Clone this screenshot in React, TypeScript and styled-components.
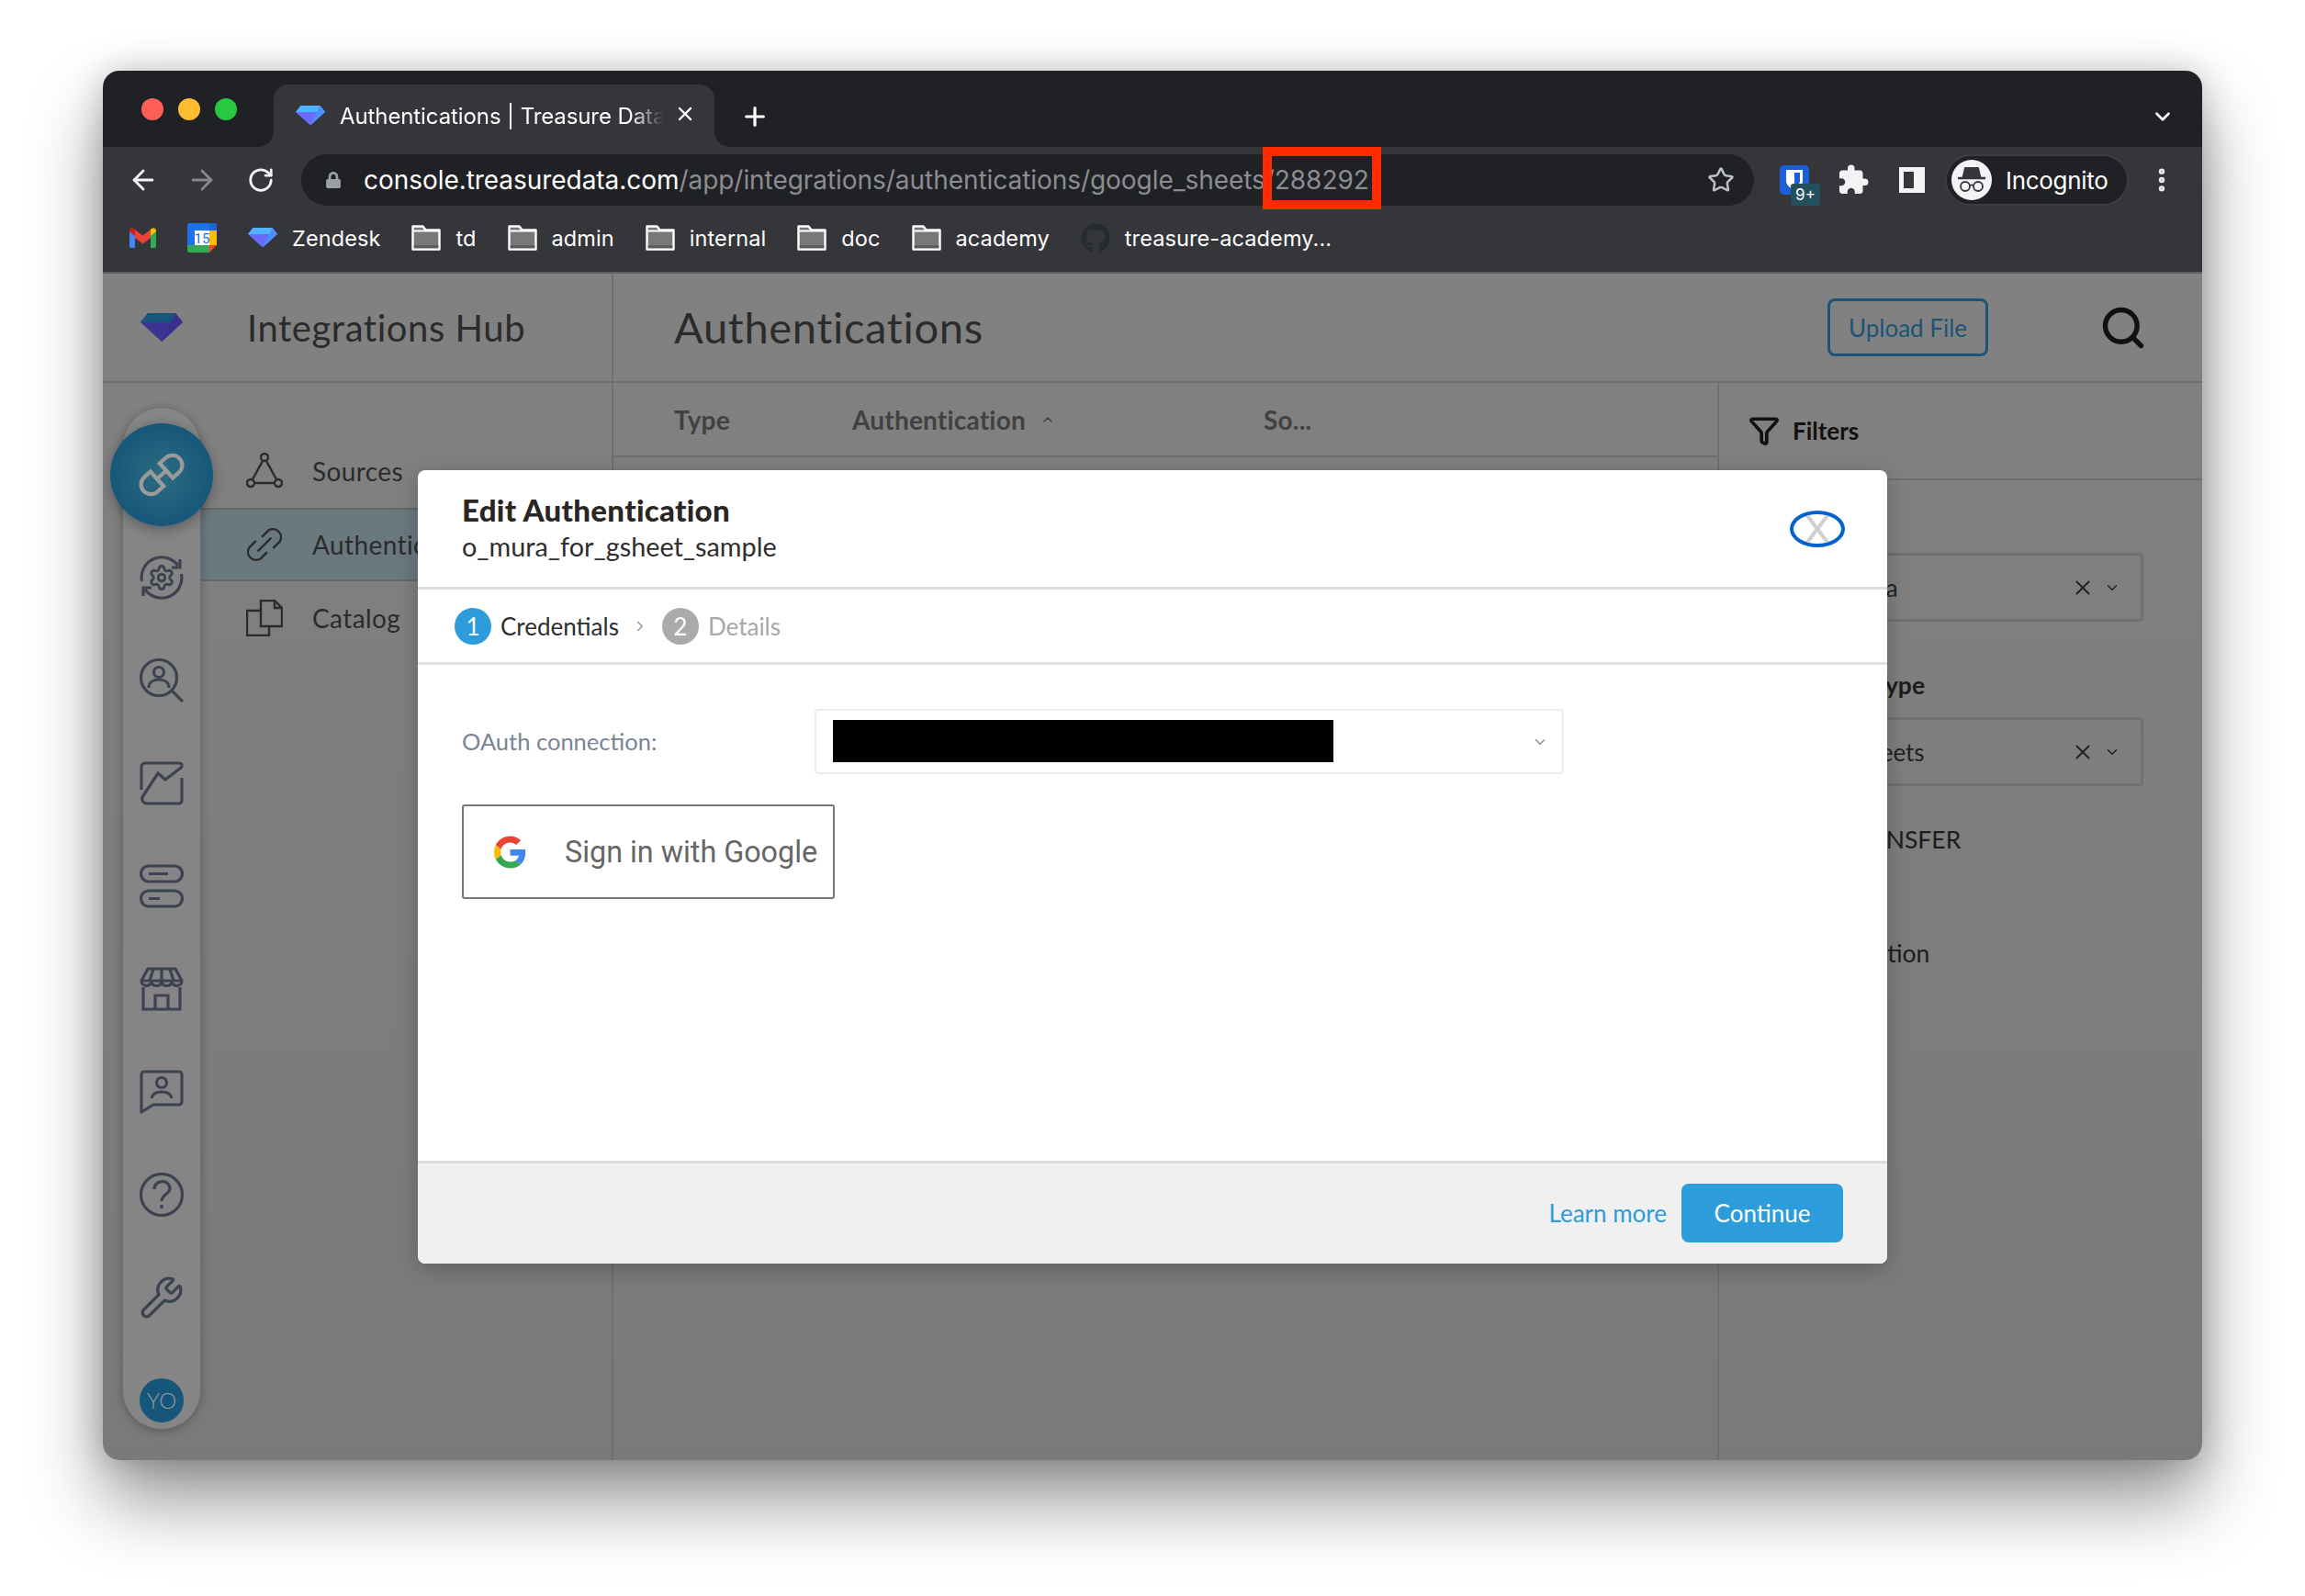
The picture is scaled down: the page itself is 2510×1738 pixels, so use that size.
import styled, { createGlobalStyle } from "styled-components";
import {
  ArrowLeft,
  ArrowRight,
  ChevronDown,
  ChevronRight,
  ChevronUp,
  EllipsisVertical,
  Funnel,
  Plus,
  RotateCw,
  Search,
  Settings,
  Star,
  Wrench,
  X,
} from "lucide-react";
import { FaGithub, FaLock } from "react-icons/fa";
import { MdExtension } from "react-icons/md";

const chromeFont = `"Inter", "Liberation Sans", sans-serif`;
const appFont = `"Lato", "Noto Sans", sans-serif`;

const GlobalStyle = createGlobalStyle`
  html, body {
    margin: 0;
    padding: 0;
    background: #fff;
  }
  * {
    box-sizing: border-box;
  }
`;

const Page = styled.div`
  width: 2510px;
  height: 1738px;
  padding: 77px 112px 148px;
  background: #fff;
  overflow: hidden;
`;

const Window = styled.div`
  position: relative;
  height: 100%;
  display: flex;
  flex-direction: column;
  border-radius: 18px;
  overflow: hidden;
`;

const WindowShadow = styled.div`
  height: 100%;
  border-radius: 18px;
  box-shadow: 0 44px 80px rgba(0, 0, 0, 0.42), 0 0 36px rgba(0, 0, 0, 0.2);
`;

const TabStrip = styled.div`
  height: 83px;
  flex: none;
  display: flex;
  align-items: flex-end;
  background: #202124;
  padding-left: 42px;
  color: #fff;
  font-family: ${chromeFont};
`;

const Lights = styled.div`
  display: flex;
  gap: 16px;
  align-self: flex-start;
  margin-top: 30px;
  margin-right: 40px;
`;

const Light = styled.span<{ $color: string }>`
  width: 24px;
  height: 24px;
  border-radius: 50%;
  background: ${(p) => p.$color};
`;

const Tab = styled.div`
  position: relative;
  width: 480px;
  height: 68px;
  display: flex;
  align-items: center;
  padding: 0 20px 0 24px;
  background: #35363a;
  border-radius: 16px 16px 0 0;

  &::before,
  &::after {
    content: "";
    position: absolute;
    bottom: 0;
    width: 16px;
    height: 16px;
  }
  &::before {
    left: -16px;
    background: radial-gradient(circle at 0 0, #202124 15.5px, #35363a 16px);
  }
  &::after {
    right: -16px;
    background: radial-gradient(circle at 100% 0, #202124 15.5px, #35363a 16px);
  }
`;

const TabTitle = styled.span`
  flex: 1;
  margin-left: 16px;
  font-size: 24px;
  letter-spacing: -0.1px;
  white-space: nowrap;
  overflow: hidden;
  mask-image: linear-gradient(to right, #000 90%, transparent 100%);
`;

const TabAction = styled.span`
  display: flex;
  margin-left: 12px;
  margin-bottom: 4px;
`;

const NewTab = styled.span`
  display: flex;
  margin-left: 28px;
  margin-bottom: 17px;
`;

const TabStripEnd = styled.span`
  display: flex;
  margin-left: auto;
  margin-right: 30px;
  margin-bottom: 20px;
`;

const Toolbar = styled.div`
  position: relative;
  height: 72px;
  flex: none;
  display: flex;
  align-items: center;
  padding: 0 12px;
  background: #35363a;
  font-family: ${chromeFont};
`;

const NavButton = styled.span<{ $dim?: boolean }>`
  width: 64px;
  display: flex;
  justify-content: center;
  color: ${(p) => (p.$dim ? "#85878b" : "#f1f3f4")};
`;

const Omnibox = styled.div`
  position: relative;
  width: 1582px;
  height: 56px;
  flex: none;
  margin-left: 12px;
  display: flex;
  align-items: center;
  padding: 0 21px 0 26px;
  border-radius: 28px;
  background: #202124;
`;

const Url = styled.span`
  flex: 1;
  margin-left: 24px;
  font-size: 28px;
  letter-spacing: -0.05px;
  color: #8b8d91;
  white-space: nowrap;
`;

const Host = styled.span`
  color: #fff;
`;

const RedMark = styled.span`
  position: absolute;
  left: 1047px;
  top: -8px;
  width: 129px;
  height: 68px;
  border: 10px solid #ff2a00;
`;

const ToolIcons = styled.div`
  display: flex;
  align-items: center;
  margin-left: 28px;
  color: #f1f3f4;
`;

const ExtIcon = styled.span`
  position: relative;
  width: 32px;
  height: 32px;
  border-radius: 5px;
  background: #1a5fd8;
  display: flex;
  justify-content: center;
  padding-top: 5px;
`;

const ExtBadge = styled.span`
  position: absolute;
  left: 12px;
  top: 20px;
  width: 32px;
  height: 24px;
  border-radius: 3px;
  background: #234f5f;
  color: #fff;
  font-size: 17px;
  line-height: 24px;
  text-align: center;
`;

const Incognito = styled.div`
  width: 200px;
  height: 56px;
  margin-left: 22px;
  display: flex;
  align-items: center;
  gap: 15px;
  padding-left: 5px;
  border-radius: 28px;
  border: 2px solid #3c3d41;
  background: #202124;
  color: #fff;
  font-size: 26px;
  letter-spacing: -0.3px;
`;

const IncognitoFace = styled.span`
  width: 44px;
  height: 44px;
  border-radius: 50%;
  background: #f1f3f4;
  display: flex;
  align-items: center;
  justify-content: center;
`;

const Kebab = styled.span`
  display: flex;
  margin-left: 20px;
  color: #e8eaed;
`;

const Bookmarks = styled.div`
  height: 66px;
  flex: none;
  display: flex;
  align-items: center;
  gap: 34px;
  padding: 0 0 10px 29px;
  background: #35363a;
  border-bottom: 2px solid #5f6063;
  color: #fff;
  font-family: ${chromeFont};
  font-size: 23.5px;
  letter-spacing: 0.1px;
`;

const Bookmark = styled.span`
  display: flex;
  align-items: center;
  gap: 16px;
  white-space: nowrap;
`;

const App = styled.div`
  flex: 1;
  min-height: 0;
  display: grid;
  grid-template-columns: 556px 1fr;
  background: linear-gradient(#818181, #7a7a7a);
  font-family: ${appFont};
  color: #2b2b2b;
`;

const LeftColumn = styled.div`
  display: flex;
  flex-direction: column;
  border-right: 2px solid #6f6f6f;
`;

const RightColumn = styled.div`
  display: flex;
  flex-direction: column;
  min-width: 0;
`;

const HubHeader = styled.div`
  height: 119px;
  flex: none;
  display: flex;
  align-items: center;
  gap: 70px;
  padding-left: 41px;
  border-bottom: 2px solid #6f6f6f;
`;

const HubTitle = styled.div`
  font-size: 40px;
  letter-spacing: 0.55px;
`;

const LeftBody = styled.div`
  flex: 1;
  display: flex;
  padding-left: 21px;
`;

const Rail = styled.div`
  position: relative;
  z-index: 1;
  width: 86px;
  height: 1114px;
  margin-top: 26px;
  padding-top: 17px;
  flex: none;
  display: flex;
  flex-direction: column;
  align-items: center;
  border-radius: 43px;
  background: #858585;
  border: 1px solid #707070;
  box-shadow: 0 2px 10px rgba(0, 0, 0, 0.25);
`;

const ActiveRailItem = styled.div`
  width: 112px;
  height: 112px;
  flex: none;
  margin: 0 -14px;
  display: flex;
  align-items: center;
  justify-content: center;
  border-radius: 50%;
  background: radial-gradient(circle, #2d6c80, #15567a 75%);
  box-shadow: 0 4px 14px rgba(0, 0, 0, 0.3);
`;

const RailItem = styled.div`
  height: 112px;
  flex: none;
  display: flex;
  align-items: center;
  justify-content: center;
  color: #3d4250;
`;

const Avatar = styled.span`
  width: 48px;
  height: 48px;
  border-radius: 50%;
  background: #15567a;
  color: #9a9a9a;
  font-size: 24px;
  font-weight: 300;
  line-height: 48px;
  text-align: center;
`;

const HubNav = styled.nav`
  flex: 1;
  padding-top: 56px;
`;

const HubNavItem = styled.div<{ $active?: boolean }>`
  height: 80px;
  display: flex;
  align-items: center;
  gap: 32px;
  padding-left: 49px;
  font-size: 28px;
  letter-spacing: 0.4px;
  color: #2b2b2b;
  background: ${(p) => (p.$active ? "#6a7880" : "transparent")};
  border-top: 2px solid ${(p) => (p.$active ? "#686868" : "transparent")};
  border-bottom: 2px solid ${(p) => (p.$active ? "#686868" : "transparent")};
`;

const PageHeader = styled.div`
  height: 119px;
  flex: none;
  display: flex;
  align-items: center;
  padding: 0 60px 0 66px;
  border-bottom: 2px solid #6f6f6f;
`;

const PageTitle = styled.div`
  flex: 1;
  margin-bottom: 2px;
  font-size: 47px;
  letter-spacing: 0.7px;
`;

const UploadButton = styled.div`
  width: 175px;
  height: 63px;
  display: flex;
  align-items: center;
  justify-content: center;
  border: 3px solid #1a5577;
  border-radius: 8px;
  color: #1a5577;
  font-size: 26px;
`;

const SearchButton = styled.span`
  display: flex;
  margin-left: 121px;
  color: #111;
`;

const Content = styled.div`
  flex: 1;
  display: flex;
  min-height: 0;
`;

const TableArea = styled.div`
  flex: 1;
  min-width: 0;
`;

const TableHead = styled.div`
  height: 81px;
  display: grid;
  grid-template-columns: 194px 448px 1fr;
  align-items: center;
  padding: 0 0 0 66px;
  border-bottom: 2px solid #6f6f6f;
  font-size: 28px;
  font-weight: 700;
  letter-spacing: 0.2px;
  color: #414141;
`;

const SortableHead = styled.span`
  display: flex;
  align-items: center;
  gap: 16px;
`;

const FilterPanel = styled.aside`
  width: 528px;
  flex: none;
  border-left: 2px solid #6f6f6f;
`;

const FilterHead = styled.div`
  height: 106px;
  display: flex;
  align-items: center;
  gap: 14px;
  padding-left: 32px;
  border-bottom: 2px solid #6f6f6f;
  font-size: 26px;
  font-weight: 700;
  color: #111;
`;

const FilterBody = styled.div`
  padding: 79px 64px 0 34px;
`;

const FilterSelect = styled.div<{ $indent: number }>`
  height: 75px;
  display: flex;
  align-items: center;
  padding: 0 22px 0 ${(p) => p.$indent}px;
  border: 3px solid #717171;
  border-radius: 4px;
  font-size: 26px;
  color: #222;
`;

const FilterValue = styled.span`
  flex: 1;
  white-space: nowrap;
`;

const ClearIcon = styled(X)`
  margin-right: -2px;
`;

const FilterLabel = styled.div<{ $indent: number; $top: number; $bold?: boolean }>`
  margin-top: ${(p) => p.$top}px;
  margin-bottom: ${(p) => (p.$bold ? 20 : 0)}px;
  padding-left: ${(p) => p.$indent}px;
  height: 30px;
  line-height: 30px;
  font-size: 26.5px;
  font-weight: ${(p) => (p.$bold ? 700 : 400)};
  color: #1c1c1c;
  white-space: nowrap;
`;

const Modal = styled.div`
  position: absolute;
  left: 343px;
  top: 435px;
  width: 1600px;
  height: 864px;
  display: flex;
  flex-direction: column;
  border-radius: 8px;
  overflow: hidden;
  background: #fff;
  font-family: ${appFont};
  box-shadow: 0 6px 24px rgba(0, 0, 0, 0.22);
`;

const ModalHeader = styled.div`
  height: 130px;
  flex: none;
  display: flex;
  align-items: center;
  justify-content: space-between;
  padding: 0 46px 4px 48px;
  border-bottom: 3px solid #dcdcdc;
`;

const ModalTitle = styled.div`
  font-size: 33px;
  font-weight: 900;
  letter-spacing: 0.3px;
  line-height: 42px;
  color: #2a2624;
`;

const ModalSubtitle = styled.div`
  font-size: 28.8px;
  line-height: 38px;
  color: #2e2e2e;
`;

const CloseRing = styled.span`
  width: 60px;
  height: 40px;
  margin-top: 5px;
  border: 4px solid #0563d0;
  border-radius: 50%;
  overflow: hidden;
  display: flex;
  align-items: center;
  justify-content: center;
`;

const Steps = styled.div`
  height: 82px;
  flex: none;
  display: flex;
  align-items: center;
  padding-left: 40px;
  border-bottom: 3px solid #e0e0e0;
  font-size: 26px;
`;

const StepDot = styled.span<{ $on?: boolean }>`
  width: 40px;
  height: 40px;
  border-radius: 50%;
  background: ${(p) => (p.$on ? "#2d9cdb" : "#aaaaaa")};
  color: #fff;
  font-size: 26px;
  line-height: 40px;
  text-align: center;
`;

const StepLabel = styled.span<{ $on?: boolean }>`
  margin-left: 10px;
  color: ${(p) => (p.$on ? "#2e2e2e" : "#a8a8a8")};
`;

const StepArrow = styled.span`
  display: flex;
  margin: 0 15px 0 14px;
  color: #999;
`;

const ModalBody = styled.div`
  flex: 1;
  padding: 48px 48px 0;
`;

const FormRow = styled.div`
  display: flex;
  align-items: center;
`;

const FormLabel = styled.label`
  width: 384px;
  margin-bottom: 2px;
  font-size: 25.5px;
  color: #7a8494;
`;

const SelectBox = styled.div`
  width: 816px;
  height: 71px;
  display: flex;
  align-items: center;
  justify-content: space-between;
  padding: 0 15px 0 18px;
  border: 2px solid #ececec;
  border-radius: 4px;
  color: #888;
`;

const Redaction = styled.span`
  width: 545px;
  height: 46px;
  margin-bottom: 2px;
  background: #000;
`;

const GoogleButton = styled.div`
  width: 406px;
  height: 103px;
  margin-top: 33px;
  display: flex;
  align-items: center;
  gap: 42px;
  padding-left: 33px;
  border: 2px solid #777;
  border-radius: 3px;
  color: #666;
  font-family: "Roboto", "Liberation Sans", sans-serif;
  font-size: 32.3px;
  white-space: nowrap;
`;

const ModalFooter = styled.div`
  height: 112px;
  flex: none;
  display: flex;
  align-items: center;
  justify-content: flex-end;
  gap: 16px;
  padding: 0 48px 2px 0;
  border-top: 3px solid #dcdcdc;
  background: #f0f0f0;
`;

const LearnMore = styled.a`
  color: #2d9cdb;
  font-size: 26px;
`;

const ContinueButton = styled.div`
  width: 176px;
  height: 64px;
  display: flex;
  align-items: center;
  justify-content: center;
  border-radius: 8px;
  background: #2d9cdb;
  color: #fff;
  font-size: 26px;
`;

const Diamond = ({ size, top, side, low }: { size: number; top: string; side: string; low: string }) => (
  <svg width={size} height={(size * 31) / 46} viewBox="0 0 46 31">
    <path d="M8 0h30l8 10-23 21L0 10z" fill={low} />
    <path d="M8 0h30l8 10H0z" fill={top} />
    <path d="M46 10 23 31l10-21 5-10z" fill={side} />
  </svg>
);

const Folder = () => (
  <svg width="32" height="28" viewBox="0 0 32 28">
    <path d="M1.500 1.500h11l3 4h15v21h-29z" fill="#77787a" stroke="#fff" strokeWidth="2.400" strokeLinejoin="round" />
    <path d="M2.700 6.500h26.600" stroke="#fff" strokeWidth="2.200" />
    <path d="M2.700 22h26.600v3.300H2.700z" fill="#5c5d5f" />
  </svg>
);

const GmailIcon = () => (
  <svg width="29" height="23" viewBox="0 0 29 23">
    <path d="M0 3v17a2 2 0 0 0 2 2h4V9z" fill="#4285f4" />
    <path d="M29 3v17a2 2 0 0 1-2 2h-4V9z" fill="#34a853" />
    <path d="M6 9 0 4V3a3 3 0 0 1 5-2l1 1z" fill="#c5221f" />
    <path d="M6 2v9l8.500 6.500L23 11V2l-8.500 6.500z" fill="#ea4335" />
    <path d="M23 2l1-1a3 3 0 0 1 5 2v1l-6 5z" fill="#fbbc04" />
  </svg>
);

const CalendarIcon = () => (
  <svg width="32" height="32" viewBox="0 0 32 32">
    <path d="M2 0h22v8H8v16H0V2a2 2 0 0 1 2-2z" fill="#1a73e8" />
    <path d="M24 0h6a2 2 0 0 1 2 2v6h-8z" fill="#1967d2" />
    <path d="M24 8h8v16h-8z" fill="#fbbc04" />
    <path d="M0 24h24v8H2a2 2 0 0 1-2-2z" fill="#34a853" />
    <path d="M24 24h8l-8 8z" fill="#ea4335" />
    <path d="M8 8h16v16H8z" fill="#fff" />
    <text x="16" y="22" fontSize="15" fontFamily="Roboto, sans-serif" textAnchor="middle" fill="#1a73e8">
      15
    </text>
  </svg>
);

const IncognitoGlyph = () => (
  <svg width="34" height="34" viewBox="0 0 34 34" fill="none" stroke="#35363a" strokeWidth="1.800">
    <path d="M10 4h14l2.500 10h-19z" fill="#35363a" />
    <path d="M2 15h30" strokeWidth="2.400" />
    <circle cx="10" cy="24" r="5" />
    <circle cx="24" cy="24" r="5" />
    <path d="M15 23c1.500-1 2.500-1 4 0" />
  </svg>
);

const ChainIcon = () => (
  <svg width="54" height="54" viewBox="0 0 48 48" fill="none" stroke="#9b9b9b" strokeWidth="3.800">
    <g transform="rotate(-42 24 24)">
      <path d="M18 14.500H10a9.500 9.500 0 0 0 0 19h8z" />
      <path d="M30 14.500h8a9.500 9.500 0 0 1 0 19h-8z" />
      <path d="M18 24h12M30 20v8M18 20v8" />
    </g>
  </svg>
);

const railStroke = { fill: "none", stroke: "currentColor", strokeWidth: 3.200 };

const GearCycleIcon = () => (
  <svg width="48" height="48" viewBox="0 0 48 48" {...railStroke}>
    <path d="M2.500 28A22 22 0 0 1 42 11" />
    <path d="M44 4v9h-9" />
    <path d="M45.500 20a22 22 0 0 1-39.500 17" />
    <path d="M4 44v-9h9" />
    <Settings x={9} y={9} width={30} height={30} strokeWidth={2.300} />
  </svg>
);

const UserSearchIcon = () => (
  <svg width="48" height="48" viewBox="0 0 48 48" {...railStroke}>
    <circle cx="21" cy="21" r="19.500" />
    <circle cx="21" cy="15" r="5.500" />
    <path d="M10 32c0-6 5-9 11-9s11 3 11 9" />
    <path d="M34 34l13 13" />
  </svg>
);

const ChartIcon = () => (
  <svg width="48" height="48" viewBox="0 0 48 48" {...railStroke}>
    <path d="M2 31V6a4 4 0 0 1 4-4h37c3 0 4 3 2 5L28 20l-8-7L3 39c-1 3 1 7 5 7h35a3 3 0 0 0 3-3V18" />
  </svg>
);

const TogglesIcon = () => (
  <svg width="48" height="48" viewBox="0 0 48 48" {...railStroke}>
    <rect x="1.500" y="2" width="45" height="17" rx="8.500" />
    <rect x="1.500" y="29" width="45" height="17" rx="8.500" />
    <path d="M10 10.500h21M10 37.500h12" />
  </svg>
);

const StoreIcon = () => (
  <svg width="48" height="48" viewBox="0 0 48 48" {...railStroke}>
    <path d="M2 15 9 2h30l7 13c0 7-10 7-11 1-1 6-10 6-11 0-1 6-10 6-11 0-1 6-11 6-11-1zM2 15h44M15 2l-4 13M24 2v13M33 2l4 13" />
    <path d="M4 22v24h40V22M17 46V31h14v15" />
  </svg>
);

const ChatUserIcon = () => (
  <svg width="48" height="48" viewBox="0 0 48 48" {...railStroke}>
    <path d="M2 46V5a3 3 0 0 1 3-3h38a3 3 0 0 1 3 3v30a3 3 0 0 1-3 3H15z" strokeLinejoin="round" />
    <circle cx="24" cy="14" r="5.500" />
    <path d="M13 31c1-5 6-7 11-7s10 2 11 7" />
  </svg>
);

const HelpIcon = () => (
  <svg width="48" height="48" viewBox="0 0 48 48" {...railStroke}>
    <circle cx="24" cy="24" r="22.500" />
    <path d="M16 18c0-11 17-11 17-1 0 7-9 6-9 14" />
    <path d="M24 35v4" />
  </svg>
);

const SourcesIcon = () => (
  <svg width="40" height="40" viewBox="0 0 40 40" fill="none" stroke="#2b2b2b" strokeWidth="2.400">
    <circle cx="20" cy="5" r="4" />
    <circle cx="5" cy="33" r="4" />
    <circle cx="35" cy="33" r="4" />
    <path d="M18 9 7 29M22 9l11 20M9 33h22" />
  </svg>
);

const LinkIcon = () => (
  <svg width="40" height="40" viewBox="2 2 36 36" fill="none" stroke="#2b2b2b" strokeWidth="2.200" strokeLinecap="round">
    <path d="M18 12l6-6a8 8 0 0 1 11 11l-6 6" />
    <path d="M22 28l-6 6a8 8 0 0 1-11-11l6-6" />
    <path d="M14 26l12-12" />
  </svg>
);

const CatalogIcon = () => (
  <svg width="40" height="40" viewBox="0 0 40 40" fill="none" stroke="#2b2b2b" strokeWidth="2.400">
    <path d="M16 1h15l8 8v20H16z" />
    <path d="M31 1v8h8" />
    <path d="M16 12H1v27h24V29" />
  </svg>
);

const GoogleG = () => (
  <svg width="35" height="36" viewBox="0 0 48 48">
    <path fill="#EA4335" d="M24 9.500c3.540 0 6.710 1.220 9.210 3.600l6.850-6.850C35.900 2.380 30.470 0 24 0 14.620 0 6.510 5.380 2.560 13.220l7.980 6.190C12.430 13.720 17.740 9.500 24 9.500z" />
    <path fill="#4285F4" d="M46.980 24.550c0-1.570-.15-3.090-.38-4.550H24v9.020h12.940c-.58 2.960-2.260 5.480-4.780 7.180l7.730 6c4.510-4.180 7.090-10.360 7.090-17.650z" />
    <path fill="#FBBC05" d="M10.530 28.590c-.48-1.450-.76-2.990-.76-4.590s.27-3.140.76-4.590l-7.980-6.190C.92 16.460 0 20.120 0 24c0 3.880.92 7.540 2.560 10.780l7.970-6.190z" />
    <path fill="#34A853" d="M24 48c6.480 0 11.930-2.130 15.890-5.810l-7.730-6c-2.150 1.450-4.920 2.300-8.160 2.300-6.260 0-11.570-4.220-13.470-9.910l-7.980 6.190C6.510 42.620 14.620 48 24 48z" />
  </svg>
);

const AppRoot = () => (
  <Page>
    <GlobalStyle />
    <WindowShadow>
      <Window>
        <TabStrip>
          <Lights>
            <Light $color="#ff5f57" />
            <Light $color="#febc2e" />
            <Light $color="#28c840" />
          </Lights>
          <Tab>
            <Diamond size={32} top="#4fb4ff" side="#4d8dff" low="#6a6cff" />
            <TabTitle>Authentications | Treasure Data</TabTitle>
            <TabAction>
              <X size={24} strokeWidth={2.400} />
            </TabAction>
          </Tab>
          <NewTab>
            <Plus size={32} strokeWidth={2.400} />
          </NewTab>
          <TabStripEnd>
            <ChevronDown size={26} strokeWidth={2.400} />
          </TabStripEnd>
        </TabStrip>

        <Toolbar>
          <NavButton>
            <ArrowLeft size={34} strokeWidth={2} />
          </NavButton>
          <NavButton $dim>
            <ArrowRight size={34} strokeWidth={2} />
          </NavButton>
          <NavButton>
            <RotateCw size={30} strokeWidth={2.200} />
          </NavButton>
          <Omnibox>
            <FaLock size={18} color="#9aa0a6" />
            <Url>
              <Host>console.treasuredata.com</Host>/app/integrations/authentications/google_sheets/288292
            </Url>
            <Star size={30} color="#bdc1c6" strokeWidth={2} />
            <RedMark />
          </Omnibox>
          <ToolIcons>
            <ExtIcon>
              <svg width="18" height="22" viewBox="0 0 18 22">
                <path d="M0 0h18v12c0 5-5 8-9 10-4-2-9-5-9-10z" fill="#fff" />
                <path d="M9 3h6v9c0 3-3 5-6 6z" fill="#1a5fd8" />
              </svg>
              <ExtBadge>9+</ExtBadge>
            </ExtIcon>
            <MdExtension size={36} style={{ marginLeft: 30 }} />
            <svg width="28" height="28" viewBox="0 0 28 28" style={{ marginLeft: 32 }}>
              <path d="M0 0h28v28H0zM5 5v18h11V5z" fill="#f1f3f4" fillRule="evenodd" />
            </svg>
            <Incognito>
              <IncognitoFace>
                <IncognitoGlyph />
              </IncognitoFace>
              Incognito
            </Incognito>
            <Kebab>
              <EllipsisVertical size={32} strokeWidth={2.800} />
            </Kebab>
          </ToolIcons>
        </Toolbar>

        <Bookmarks>
          <GmailIcon />
          <CalendarIcon />
          <Bookmark>
            <Diamond size={32} top="#4fb4ff" side="#4d8dff" low="#6a6cff" />
            Zendesk
          </Bookmark>
          <Bookmark>
            <Folder />
            td
          </Bookmark>
          <Bookmark>
            <Folder />
            admin
          </Bookmark>
          <Bookmark>
            <Folder />
            internal
          </Bookmark>
          <Bookmark>
            <Folder />
            doc
          </Bookmark>
          <Bookmark>
            <Folder />
            academy
          </Bookmark>
          <Bookmark>
            <FaGithub size={32} color="#272b2d" />
            treasure-academy...
          </Bookmark>
        </Bookmarks>

        <App>
          <LeftColumn>
            <HubHeader>
              <Diamond size={46} top="#17567a" side="#3a2f8c" low="#3b3490" />
              <HubTitle>Integrations Hub</HubTitle>
            </HubHeader>
            <LeftBody>
              <Rail>
                <ActiveRailItem>
                  <ChainIcon />
                </ActiveRailItem>
                <RailItem><GearCycleIcon /></RailItem>
                <RailItem><UserSearchIcon /></RailItem>
                <RailItem><ChartIcon /></RailItem>
                <RailItem><TogglesIcon /></RailItem>
                <RailItem><StoreIcon /></RailItem>
                <RailItem><ChatUserIcon /></RailItem>
                <RailItem><HelpIcon /></RailItem>
                <RailItem><Wrench size={50} strokeWidth={1.600} /></RailItem>
                <RailItem><Avatar>YO</Avatar></RailItem>
              </Rail>
              <HubNav>
                <HubNavItem>
                  <SourcesIcon />
                  Sources
                </HubNavItem>
                <HubNavItem $active>
                  <LinkIcon />
                  Authentications
                </HubNavItem>
                <HubNavItem>
                  <CatalogIcon />
                  Catalog
                </HubNavItem>
              </HubNav>
            </LeftBody>
          </LeftColumn>

          <RightColumn>
            <PageHeader>
              <PageTitle>Authentications</PageTitle>
              <UploadButton>Upload File</UploadButton>
              <SearchButton>
                <Search size={52} strokeWidth={2.500} />
              </SearchButton>
            </PageHeader>
            <Content>
              <TableArea>
                <TableHead>
                  <span>Type</span>
                  <SortableHead>
                    Authentication
                    <ChevronUp size={16} strokeWidth={2.400} />
                  </SortableHead>
                  <span>So...</span>
                </TableHead>
              </TableArea>
              <FilterPanel>
                <FilterHead>
                  <Funnel size={34} strokeWidth={2.600} />
                  Filters
                </FilterHead>
                <FilterBody>
                  <FilterSelect $indent={0}>
                    <FilterValue>Treasure Data</FilterValue>
                    <ClearIcon size={26} strokeWidth={1.800} />
                    <ChevronDown size={18} strokeWidth={2} style={{ marginLeft: 12 }} />
                  </FilterSelect>
                  <FilterLabel $indent={4} $top={54} $bold>
                    Connector Type
                  </FilterLabel>
                  <FilterSelect $indent={22}>
                    <FilterValue>Google Sheets</FilterValue>
                    <ClearIcon size={26} strokeWidth={1.800} />
                    <ChevronDown size={18} strokeWidth={2} style={{ marginLeft: 12 }} />
                  </FilterSelect>
                  <FilterLabel $indent={25} $top={43}>
                    DATA TRANSFER
                  </FilterLabel>
                  <FilterLabel $indent={22} $top={94}>
                    Authentication
                  </FilterLabel>
                </FilterBody>
              </FilterPanel>
            </Content>
          </RightColumn>
        </App>

        <Modal>
          <ModalHeader>
            <div>
              <ModalTitle>Edit Authentication</ModalTitle>
              <ModalSubtitle>o_mura_for_gsheet_sample</ModalSubtitle>
            </div>
            <CloseRing>
              <svg width="52" height="32" viewBox="0 0 52 32" stroke="#cfcfcf" strokeWidth="4">
                <path d="M14 0l24 32M38 0 14 32" />
              </svg>
            </CloseRing>
          </ModalHeader>
          <Steps>
            <StepDot $on>1</StepDot>
            <StepLabel $on>Credentials</StepLabel>
            <StepArrow>
              <ChevronRight size={18} />
            </StepArrow>
            <StepDot>2</StepDot>
            <StepLabel>Details</StepLabel>
          </Steps>
          <ModalBody>
            <FormRow>
              <FormLabel>OAuth connection:</FormLabel>
              <SelectBox>
                <Redaction />
                <ChevronDown size={18} strokeWidth={1.800} />
              </SelectBox>
            </FormRow>
            <GoogleButton>
              <GoogleG />
              Sign in with Google
            </GoogleButton>
          </ModalBody>
          <ModalFooter>
            <LearnMore>Learn more</LearnMore>
            <ContinueButton>Continue</ContinueButton>
          </ModalFooter>
        </Modal>
      </Window>
    </WindowShadow>
  </Page>
);

export default AppRoot;
